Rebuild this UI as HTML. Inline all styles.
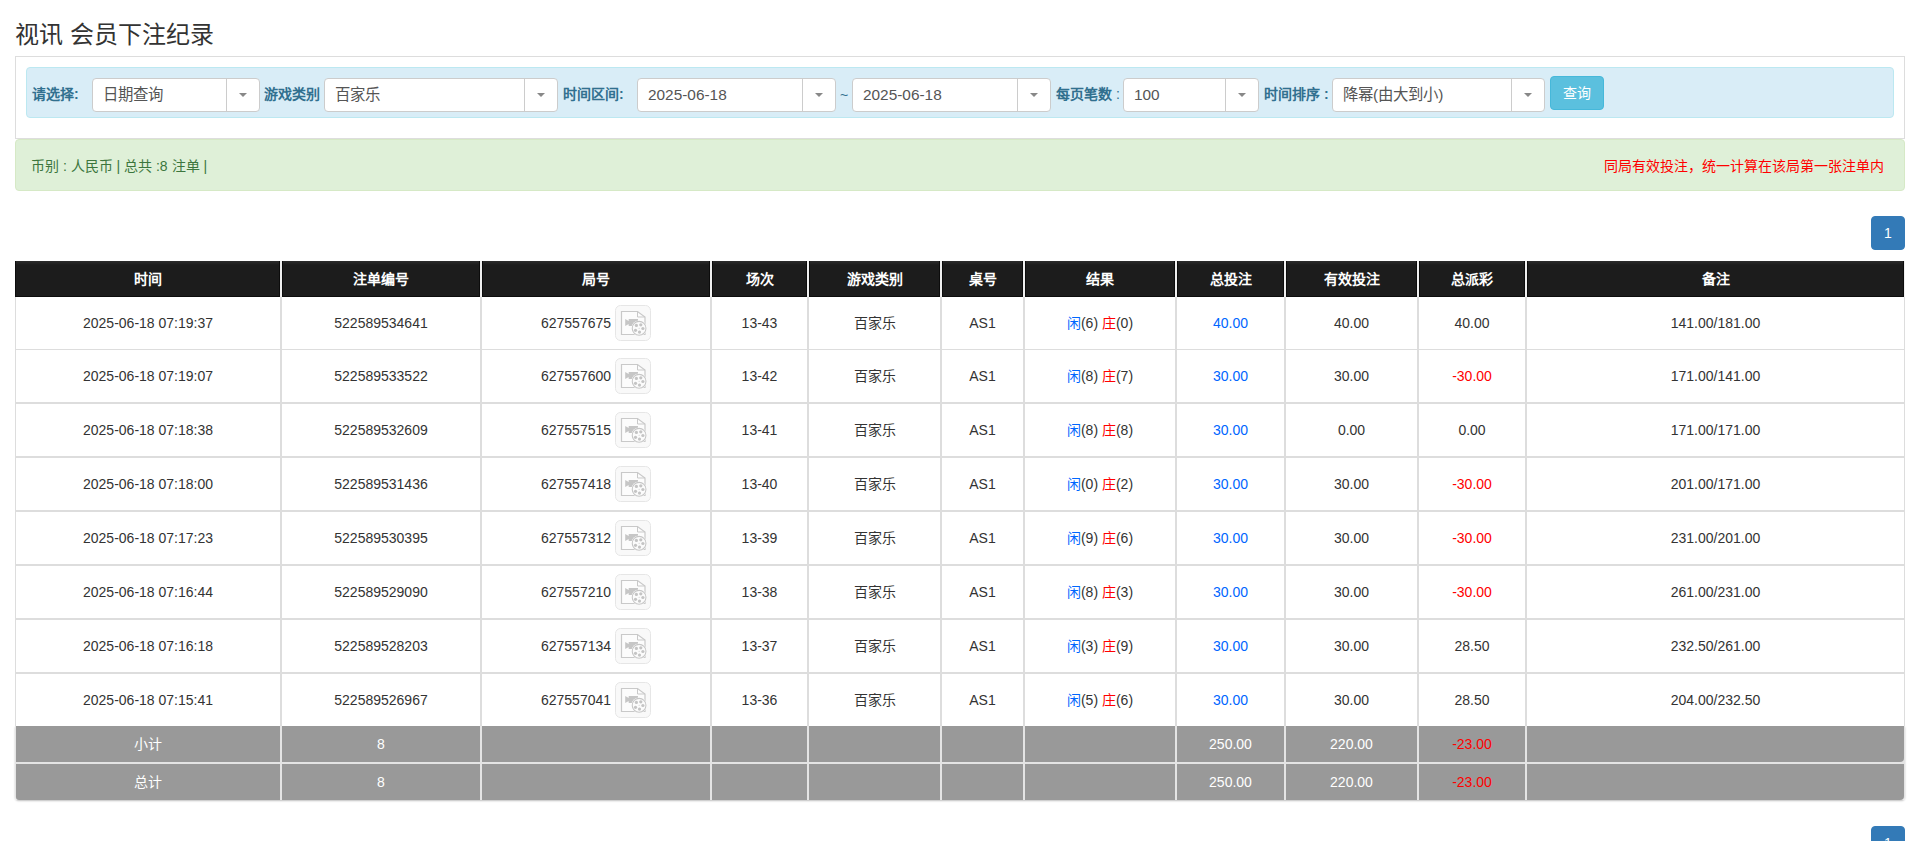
<!DOCTYPE html>
<html lang="zh-CN"><head><meta charset="utf-8"><title>视讯 会员下注纪录</title>
<style>
*{box-sizing:border-box;margin:0;padding:0}
html,body{width:1919px;height:841px;overflow:hidden;background:#fff}
body{font-family:"Liberation Sans",sans-serif;font-size:14px;color:#333;position:relative}
.abs{position:absolute}
h3{position:absolute;left:15px;top:22px;font-size:24px;font-weight:normal;line-height:26px;color:#333;white-space:nowrap}
.panel{position:absolute;left:15px;top:56px;width:1890px;height:83px;border:1px solid #ddd;border-bottom:1px solid #ddd;background:#fff}
.info{position:absolute;left:26px;top:67px;width:1868px;height:51px;background:#d9edf7;border:1px solid #bce8f1;border-radius:4px}
.lbl{position:absolute;top:84px;height:20px;line-height:20px;font-weight:bold;color:#31708f;white-space:nowrap;font-size:14px}
.sel{position:absolute;top:78px;height:34px;background:#fff;border:1px solid #ccc;border-radius:4px}
.sel .t{position:absolute;left:10px;top:0;line-height:32px;color:#555;white-space:nowrap;font-size:15.4px}
.sel .a{position:absolute;top:0;right:0;width:33px;height:32px;border-left:1px solid #ccc}
.sel .a:after{content:"";position:absolute;left:12px;top:14px;border-left:4px solid transparent;border-right:4px solid transparent;border-top:4px solid #888}
.btn{position:absolute;left:1550px;top:76px;width:54px;height:34px;background:#5bc0de;border:1px solid #46b8da;border-radius:4px;color:#fff;text-align:center;line-height:32px;font-size:14px}
.succ{position:absolute;left:15px;top:139px;width:1890px;height:52px;background:#dff0d8;border:1px solid #d6e9c6;border-radius:4px;color:#3c763d}
.succ .l{position:absolute;left:15px;top:16px;line-height:20px;white-space:nowrap}
.succ .rt{position:absolute;right:20px;top:16px;line-height:20px;color:#f00;white-space:nowrap}
.pg{position:absolute;left:1871px;width:34px;height:34px;background:#337ab7;border:1px solid #337ab7;border-radius:4px;color:#fff;text-align:center;line-height:32px;font-size:14px}
.tbl{position:absolute;left:0;top:0}
.thead .th{position:absolute;top:261px;height:36px;background:linear-gradient(#2c2c2c,#1c1c1c 4px);border:1px solid #0c0c0c;border-top:0;color:#fff;font-weight:bold;text-align:center;line-height:36px;white-space:nowrap}
.tbg{position:absolute;left:15px;top:261px;width:1890px;height:539px;background:#efefef}
.bodybg{position:absolute;left:15px;top:297px;width:1890px;height:429px;background:#fff;border-left:1px solid #ddd;border-right:1px solid #ddd}
.tr{position:absolute;left:0;width:1919px}
.c{position:absolute;top:0;height:100%;display:flex;align-items:center;justify-content:center;white-space:nowrap;line-height:20px}
.hl{position:absolute;left:15px;width:1890px;background:#ddd}
.vl{position:absolute;top:297px;height:429px;width:2px;background:#ddd}
.tf .fc{position:absolute;height:36px;background:#999;color:#fff;text-align:center;line-height:36px;white-space:nowrap}
.tf{position:absolute;left:0;width:1919px;height:36px}
.b{color:#0066ff}
.r,.tf .fc.r{color:#ff0000}
.jh .jn{margin-right:4px}
.ic{display:block}
.shadow{position:absolute;left:15px;top:726px;width:1890px;height:74px;border-radius:0 0 4px 4px;box-shadow:0 1px 2px rgba(0,0,0,.25)}
</style></head><body>
<h3>视讯 会员下注纪录</h3>
<div class="panel"></div>
<div class="info"></div>
<div class="lbl" style="left:32px">请选择:</div>
<div class="sel" style="left:92px;width:168px"><span class="t">日期查询</span><span class="a"></span></div>
<div class="lbl" style="left:264px">游戏类别</div>
<div class="sel" style="left:324px;width:234px"><span class="t">百家乐</span><span class="a"></span></div>
<div class="lbl" style="left:563px">时间区间:</div>
<div class="sel" style="left:637px;width:199px"><span class="t">2025-06-18</span><span class="a"></span></div>
<div class="lbl" style="left:840px;top:85px;font-weight:normal">~</div>
<div class="sel" style="left:852px;width:199px"><span class="t">2025-06-18</span><span class="a"></span></div>
<div class="lbl" style="left:1056px">每页笔数<span style="font-weight:normal"> :</span></div>
<div class="sel" style="left:1123px;width:136px"><span class="t">100</span><span class="a"></span></div>
<div class="lbl" style="left:1264px">时间排序 :</div>
<div class="sel" style="left:1332px;width:213px"><span class="t">降幂(由大到小)</span><span class="a"></span></div>
<div class="btn">查询</div>
<div class="succ"><span class="l">币别 : 人民币 | 总共 :8 注单 |</span><span class="rt">同局有效投注，统一计算在该局第一张注单内</span></div>
<div class="pg" style="top:216px">1</div>
<div class="shadow"></div>
<div class="tbg"></div>
<div class="bodybg"></div><div style="position:absolute;left:15px;top:726px;width:1890px;height:74px;background:#e4e4e4;border-radius:0 0 4px 4px"></div>
<div class="thead">
<div class="th" style="left:15px;width:265px">时间</div>
<div class="th" style="left:282px;width:198px">注单编号</div>
<div class="th" style="left:482px;width:228px">局号</div>
<div class="th" style="left:712px;width:95px">场次</div>
<div class="th" style="left:809px;width:131px">游戏类别</div>
<div class="th" style="left:942px;width:81px">桌号</div>
<div class="th" style="left:1025px;width:150px">结果</div>
<div class="th" style="left:1177px;width:107px">总投注</div>
<div class="th" style="left:1286px;width:131px">有效投注</div>
<div class="th" style="left:1419px;width:106px">总派彩</div>
<div class="th" style="left:1527px;width:377px">备注</div>
</div>
<div class="tr" style="top:297px;height:52px">
<div class="c " style="left:16px;width:264px">2025-06-18 07:19:37</div>
<div class="c " style="left:282px;width:198px">522589534641</div>
<div class="c jh" style="left:482px;width:228px"><span class="jn">627557675</span><svg class="ic" width="36" height="36" viewBox="0 0 36 36"><rect x="0.5" y="0.5" width="35" height="35" rx="5" fill="#f9f9f9" stroke="#e6e6e6"/><path d="M6.5 6.5H22.5L30 12V29.5H6.5Z" fill="#fcfcfc" stroke="#c9c9c9" stroke-width="1.2"/><path d="M22.5 6.5V12H30" fill="none" stroke="#c9c9c9" stroke-width="1"/><path d="M10.2 14L13.7 15.9V19L10.2 21Z M13.7 14H23V21H13.7Z" fill="#c6c6c6"/><circle cx="24.1" cy="23.3" r="7.8" fill="#fff"/><circle cx="24.1" cy="23.3" r="6.9" fill="#fbfbfb" stroke="#c6c6c6" stroke-width="1.1"/><g fill="#c4c4c4"><circle cx="21.4" cy="20.4" r="1.6"/><circle cx="25.8" cy="19.8" r="1.6"/><circle cx="27.9" cy="23.5" r="1.6"/><circle cx="24.5" cy="27.1" r="1.6"/><circle cx="20.5" cy="25.3" r="1.6"/><circle cx="24.1" cy="23.3" r="0.5"/></g></svg></div>
<div class="c " style="left:712px;width:95px">13-43</div>
<div class="c " style="left:809px;width:131px">百家乐</div>
<div class="c " style="left:942px;width:81px">AS1</div>
<div class="c " style="left:1025px;width:150px"><span><span class="b">闲</span>(6) <span class="r">庄</span>(0)</span></div>
<div class="c b" style="left:1177px;width:107px">40.00</div>
<div class="c " style="left:1286px;width:131px">40.00</div>
<div class="c " style="left:1419px;width:106px">40.00</div>
<div class="c " style="left:1527px;width:377px">141.00/181.00</div>
</div>
<div class="tr" style="top:350px;height:52px">
<div class="c " style="left:16px;width:264px">2025-06-18 07:19:07</div>
<div class="c " style="left:282px;width:198px">522589533522</div>
<div class="c jh" style="left:482px;width:228px"><span class="jn">627557600</span><svg class="ic" width="36" height="36" viewBox="0 0 36 36"><rect x="0.5" y="0.5" width="35" height="35" rx="5" fill="#f9f9f9" stroke="#e6e6e6"/><path d="M6.5 6.5H22.5L30 12V29.5H6.5Z" fill="#fcfcfc" stroke="#c9c9c9" stroke-width="1.2"/><path d="M22.5 6.5V12H30" fill="none" stroke="#c9c9c9" stroke-width="1"/><path d="M10.2 14L13.7 15.9V19L10.2 21Z M13.7 14H23V21H13.7Z" fill="#c6c6c6"/><circle cx="24.1" cy="23.3" r="7.8" fill="#fff"/><circle cx="24.1" cy="23.3" r="6.9" fill="#fbfbfb" stroke="#c6c6c6" stroke-width="1.1"/><g fill="#c4c4c4"><circle cx="21.4" cy="20.4" r="1.6"/><circle cx="25.8" cy="19.8" r="1.6"/><circle cx="27.9" cy="23.5" r="1.6"/><circle cx="24.5" cy="27.1" r="1.6"/><circle cx="20.5" cy="25.3" r="1.6"/><circle cx="24.1" cy="23.3" r="0.5"/></g></svg></div>
<div class="c " style="left:712px;width:95px">13-42</div>
<div class="c " style="left:809px;width:131px">百家乐</div>
<div class="c " style="left:942px;width:81px">AS1</div>
<div class="c " style="left:1025px;width:150px"><span><span class="b">闲</span>(8) <span class="r">庄</span>(7)</span></div>
<div class="c b" style="left:1177px;width:107px">30.00</div>
<div class="c " style="left:1286px;width:131px">30.00</div>
<div class="c r" style="left:1419px;width:106px">-30.00</div>
<div class="c " style="left:1527px;width:377px">171.00/141.00</div>
</div>
<div class="tr" style="top:404px;height:52px">
<div class="c " style="left:16px;width:264px">2025-06-18 07:18:38</div>
<div class="c " style="left:282px;width:198px">522589532609</div>
<div class="c jh" style="left:482px;width:228px"><span class="jn">627557515</span><svg class="ic" width="36" height="36" viewBox="0 0 36 36"><rect x="0.5" y="0.5" width="35" height="35" rx="5" fill="#f9f9f9" stroke="#e6e6e6"/><path d="M6.5 6.5H22.5L30 12V29.5H6.5Z" fill="#fcfcfc" stroke="#c9c9c9" stroke-width="1.2"/><path d="M22.5 6.5V12H30" fill="none" stroke="#c9c9c9" stroke-width="1"/><path d="M10.2 14L13.7 15.9V19L10.2 21Z M13.7 14H23V21H13.7Z" fill="#c6c6c6"/><circle cx="24.1" cy="23.3" r="7.8" fill="#fff"/><circle cx="24.1" cy="23.3" r="6.9" fill="#fbfbfb" stroke="#c6c6c6" stroke-width="1.1"/><g fill="#c4c4c4"><circle cx="21.4" cy="20.4" r="1.6"/><circle cx="25.8" cy="19.8" r="1.6"/><circle cx="27.9" cy="23.5" r="1.6"/><circle cx="24.5" cy="27.1" r="1.6"/><circle cx="20.5" cy="25.3" r="1.6"/><circle cx="24.1" cy="23.3" r="0.5"/></g></svg></div>
<div class="c " style="left:712px;width:95px">13-41</div>
<div class="c " style="left:809px;width:131px">百家乐</div>
<div class="c " style="left:942px;width:81px">AS1</div>
<div class="c " style="left:1025px;width:150px"><span><span class="b">闲</span>(8) <span class="r">庄</span>(8)</span></div>
<div class="c b" style="left:1177px;width:107px">30.00</div>
<div class="c " style="left:1286px;width:131px">0.00</div>
<div class="c " style="left:1419px;width:106px">0.00</div>
<div class="c " style="left:1527px;width:377px">171.00/171.00</div>
</div>
<div class="tr" style="top:458px;height:52px">
<div class="c " style="left:16px;width:264px">2025-06-18 07:18:00</div>
<div class="c " style="left:282px;width:198px">522589531436</div>
<div class="c jh" style="left:482px;width:228px"><span class="jn">627557418</span><svg class="ic" width="36" height="36" viewBox="0 0 36 36"><rect x="0.5" y="0.5" width="35" height="35" rx="5" fill="#f9f9f9" stroke="#e6e6e6"/><path d="M6.5 6.5H22.5L30 12V29.5H6.5Z" fill="#fcfcfc" stroke="#c9c9c9" stroke-width="1.2"/><path d="M22.5 6.5V12H30" fill="none" stroke="#c9c9c9" stroke-width="1"/><path d="M10.2 14L13.7 15.9V19L10.2 21Z M13.7 14H23V21H13.7Z" fill="#c6c6c6"/><circle cx="24.1" cy="23.3" r="7.8" fill="#fff"/><circle cx="24.1" cy="23.3" r="6.9" fill="#fbfbfb" stroke="#c6c6c6" stroke-width="1.1"/><g fill="#c4c4c4"><circle cx="21.4" cy="20.4" r="1.6"/><circle cx="25.8" cy="19.8" r="1.6"/><circle cx="27.9" cy="23.5" r="1.6"/><circle cx="24.5" cy="27.1" r="1.6"/><circle cx="20.5" cy="25.3" r="1.6"/><circle cx="24.1" cy="23.3" r="0.5"/></g></svg></div>
<div class="c " style="left:712px;width:95px">13-40</div>
<div class="c " style="left:809px;width:131px">百家乐</div>
<div class="c " style="left:942px;width:81px">AS1</div>
<div class="c " style="left:1025px;width:150px"><span><span class="b">闲</span>(0) <span class="r">庄</span>(2)</span></div>
<div class="c b" style="left:1177px;width:107px">30.00</div>
<div class="c " style="left:1286px;width:131px">30.00</div>
<div class="c r" style="left:1419px;width:106px">-30.00</div>
<div class="c " style="left:1527px;width:377px">201.00/171.00</div>
</div>
<div class="tr" style="top:512px;height:52px">
<div class="c " style="left:16px;width:264px">2025-06-18 07:17:23</div>
<div class="c " style="left:282px;width:198px">522589530395</div>
<div class="c jh" style="left:482px;width:228px"><span class="jn">627557312</span><svg class="ic" width="36" height="36" viewBox="0 0 36 36"><rect x="0.5" y="0.5" width="35" height="35" rx="5" fill="#f9f9f9" stroke="#e6e6e6"/><path d="M6.5 6.5H22.5L30 12V29.5H6.5Z" fill="#fcfcfc" stroke="#c9c9c9" stroke-width="1.2"/><path d="M22.5 6.5V12H30" fill="none" stroke="#c9c9c9" stroke-width="1"/><path d="M10.2 14L13.7 15.9V19L10.2 21Z M13.7 14H23V21H13.7Z" fill="#c6c6c6"/><circle cx="24.1" cy="23.3" r="7.8" fill="#fff"/><circle cx="24.1" cy="23.3" r="6.9" fill="#fbfbfb" stroke="#c6c6c6" stroke-width="1.1"/><g fill="#c4c4c4"><circle cx="21.4" cy="20.4" r="1.6"/><circle cx="25.8" cy="19.8" r="1.6"/><circle cx="27.9" cy="23.5" r="1.6"/><circle cx="24.5" cy="27.1" r="1.6"/><circle cx="20.5" cy="25.3" r="1.6"/><circle cx="24.1" cy="23.3" r="0.5"/></g></svg></div>
<div class="c " style="left:712px;width:95px">13-39</div>
<div class="c " style="left:809px;width:131px">百家乐</div>
<div class="c " style="left:942px;width:81px">AS1</div>
<div class="c " style="left:1025px;width:150px"><span><span class="b">闲</span>(9) <span class="r">庄</span>(6)</span></div>
<div class="c b" style="left:1177px;width:107px">30.00</div>
<div class="c " style="left:1286px;width:131px">30.00</div>
<div class="c r" style="left:1419px;width:106px">-30.00</div>
<div class="c " style="left:1527px;width:377px">231.00/201.00</div>
</div>
<div class="tr" style="top:566px;height:52px">
<div class="c " style="left:16px;width:264px">2025-06-18 07:16:44</div>
<div class="c " style="left:282px;width:198px">522589529090</div>
<div class="c jh" style="left:482px;width:228px"><span class="jn">627557210</span><svg class="ic" width="36" height="36" viewBox="0 0 36 36"><rect x="0.5" y="0.5" width="35" height="35" rx="5" fill="#f9f9f9" stroke="#e6e6e6"/><path d="M6.5 6.5H22.5L30 12V29.5H6.5Z" fill="#fcfcfc" stroke="#c9c9c9" stroke-width="1.2"/><path d="M22.5 6.5V12H30" fill="none" stroke="#c9c9c9" stroke-width="1"/><path d="M10.2 14L13.7 15.9V19L10.2 21Z M13.7 14H23V21H13.7Z" fill="#c6c6c6"/><circle cx="24.1" cy="23.3" r="7.8" fill="#fff"/><circle cx="24.1" cy="23.3" r="6.9" fill="#fbfbfb" stroke="#c6c6c6" stroke-width="1.1"/><g fill="#c4c4c4"><circle cx="21.4" cy="20.4" r="1.6"/><circle cx="25.8" cy="19.8" r="1.6"/><circle cx="27.9" cy="23.5" r="1.6"/><circle cx="24.5" cy="27.1" r="1.6"/><circle cx="20.5" cy="25.3" r="1.6"/><circle cx="24.1" cy="23.3" r="0.5"/></g></svg></div>
<div class="c " style="left:712px;width:95px">13-38</div>
<div class="c " style="left:809px;width:131px">百家乐</div>
<div class="c " style="left:942px;width:81px">AS1</div>
<div class="c " style="left:1025px;width:150px"><span><span class="b">闲</span>(8) <span class="r">庄</span>(3)</span></div>
<div class="c b" style="left:1177px;width:107px">30.00</div>
<div class="c " style="left:1286px;width:131px">30.00</div>
<div class="c r" style="left:1419px;width:106px">-30.00</div>
<div class="c " style="left:1527px;width:377px">261.00/231.00</div>
</div>
<div class="tr" style="top:620px;height:52px">
<div class="c " style="left:16px;width:264px">2025-06-18 07:16:18</div>
<div class="c " style="left:282px;width:198px">522589528203</div>
<div class="c jh" style="left:482px;width:228px"><span class="jn">627557134</span><svg class="ic" width="36" height="36" viewBox="0 0 36 36"><rect x="0.5" y="0.5" width="35" height="35" rx="5" fill="#f9f9f9" stroke="#e6e6e6"/><path d="M6.5 6.5H22.5L30 12V29.5H6.5Z" fill="#fcfcfc" stroke="#c9c9c9" stroke-width="1.2"/><path d="M22.5 6.5V12H30" fill="none" stroke="#c9c9c9" stroke-width="1"/><path d="M10.2 14L13.7 15.9V19L10.2 21Z M13.7 14H23V21H13.7Z" fill="#c6c6c6"/><circle cx="24.1" cy="23.3" r="7.8" fill="#fff"/><circle cx="24.1" cy="23.3" r="6.9" fill="#fbfbfb" stroke="#c6c6c6" stroke-width="1.1"/><g fill="#c4c4c4"><circle cx="21.4" cy="20.4" r="1.6"/><circle cx="25.8" cy="19.8" r="1.6"/><circle cx="27.9" cy="23.5" r="1.6"/><circle cx="24.5" cy="27.1" r="1.6"/><circle cx="20.5" cy="25.3" r="1.6"/><circle cx="24.1" cy="23.3" r="0.5"/></g></svg></div>
<div class="c " style="left:712px;width:95px">13-37</div>
<div class="c " style="left:809px;width:131px">百家乐</div>
<div class="c " style="left:942px;width:81px">AS1</div>
<div class="c " style="left:1025px;width:150px"><span><span class="b">闲</span>(3) <span class="r">庄</span>(9)</span></div>
<div class="c b" style="left:1177px;width:107px">30.00</div>
<div class="c " style="left:1286px;width:131px">30.00</div>
<div class="c " style="left:1419px;width:106px">28.50</div>
<div class="c " style="left:1527px;width:377px">232.50/261.00</div>
</div>
<div class="tr" style="top:674px;height:52px">
<div class="c " style="left:16px;width:264px">2025-06-18 07:15:41</div>
<div class="c " style="left:282px;width:198px">522589526967</div>
<div class="c jh" style="left:482px;width:228px"><span class="jn">627557041</span><svg class="ic" width="36" height="36" viewBox="0 0 36 36"><rect x="0.5" y="0.5" width="35" height="35" rx="5" fill="#f9f9f9" stroke="#e6e6e6"/><path d="M6.5 6.5H22.5L30 12V29.5H6.5Z" fill="#fcfcfc" stroke="#c9c9c9" stroke-width="1.2"/><path d="M22.5 6.5V12H30" fill="none" stroke="#c9c9c9" stroke-width="1"/><path d="M10.2 14L13.7 15.9V19L10.2 21Z M13.7 14H23V21H13.7Z" fill="#c6c6c6"/><circle cx="24.1" cy="23.3" r="7.8" fill="#fff"/><circle cx="24.1" cy="23.3" r="6.9" fill="#fbfbfb" stroke="#c6c6c6" stroke-width="1.1"/><g fill="#c4c4c4"><circle cx="21.4" cy="20.4" r="1.6"/><circle cx="25.8" cy="19.8" r="1.6"/><circle cx="27.9" cy="23.5" r="1.6"/><circle cx="24.5" cy="27.1" r="1.6"/><circle cx="20.5" cy="25.3" r="1.6"/><circle cx="24.1" cy="23.3" r="0.5"/></g></svg></div>
<div class="c " style="left:712px;width:95px">13-36</div>
<div class="c " style="left:809px;width:131px">百家乐</div>
<div class="c " style="left:942px;width:81px">AS1</div>
<div class="c " style="left:1025px;width:150px"><span><span class="b">闲</span>(5) <span class="r">庄</span>(6)</span></div>
<div class="c b" style="left:1177px;width:107px">30.00</div>
<div class="c " style="left:1286px;width:131px">30.00</div>
<div class="c " style="left:1419px;width:106px">28.50</div>
<div class="c " style="left:1527px;width:377px">204.00/232.50</div>
</div>
<div class="hl" style="top:349px;height:1px"></div>
<div class="hl" style="top:402px;height:2px"></div>
<div class="hl" style="top:456px;height:2px"></div>
<div class="hl" style="top:510px;height:2px"></div>
<div class="hl" style="top:564px;height:2px"></div>
<div class="hl" style="top:618px;height:2px"></div>
<div class="hl" style="top:672px;height:2px"></div>
<div class="vl" style="left:280px"></div>
<div class="vl" style="left:480px"></div>
<div class="vl" style="left:710px"></div>
<div class="vl" style="left:807px"></div>
<div class="vl" style="left:940px"></div>
<div class="vl" style="left:1023px"></div>
<div class="vl" style="left:1175px"></div>
<div class="vl" style="left:1284px"></div>
<div class="vl" style="left:1417px"></div>
<div class="vl" style="left:1525px"></div>
<div class="tf" style="top:726px">
<div class="fc " style="left:16px;width:264px;">小计</div>
<div class="fc " style="left:282px;width:198px;">8</div>
<div class="fc " style="left:482px;width:228px;"></div>
<div class="fc " style="left:712px;width:95px;"></div>
<div class="fc " style="left:809px;width:131px;"></div>
<div class="fc " style="left:942px;width:81px;"></div>
<div class="fc " style="left:1025px;width:150px;"></div>
<div class="fc " style="left:1177px;width:107px;">250.00</div>
<div class="fc " style="left:1286px;width:131px;">220.00</div>
<div class="fc r" style="left:1419px;width:106px;">-23.00</div>
<div class="fc " style="left:1527px;width:377px;border-bottom-right-radius:4px;"></div>
</div>
<div class="tf" style="top:764px">
<div class="fc " style="left:16px;width:264px;border-bottom-left-radius:3px;">总计</div>
<div class="fc " style="left:282px;width:198px;">8</div>
<div class="fc " style="left:482px;width:228px;"></div>
<div class="fc " style="left:712px;width:95px;"></div>
<div class="fc " style="left:809px;width:131px;"></div>
<div class="fc " style="left:942px;width:81px;"></div>
<div class="fc " style="left:1025px;width:150px;"></div>
<div class="fc " style="left:1177px;width:107px;">250.00</div>
<div class="fc " style="left:1286px;width:131px;">220.00</div>
<div class="fc r" style="left:1419px;width:106px;">-23.00</div>
<div class="fc " style="left:1527px;width:377px;border-bottom-right-radius:4px;"></div>
</div>
<div class="pg" style="top:826px">1</div>
</body></html>
